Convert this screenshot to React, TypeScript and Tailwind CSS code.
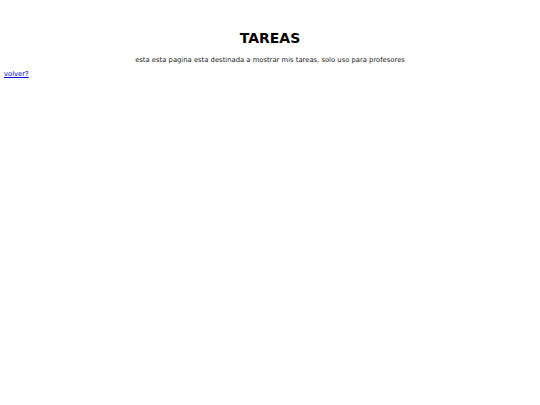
import React from 'react';

const App: React.FC = () => {
  return (
    <div className="min-h-[405px] bg-white text-black font-['DejaVu_Sans',sans-serif]">
      <div className="pt-[30px] text-center">
        <h1 className="text-[14px] font-bold leading-[16px]">TAREAS</h1>
        <p className="mt-[10px] text-[6.8px] leading-[9px] text-[#222]">
          esta esta pagina esta destinada a mostrar mis tareas, solo uso para profesores
        </p>
      </div>
      <div className="mt-[5px] px-[4px] text-[6.8px] leading-[9px]">
        <a href="#" className="text-[#0000ee] underline">volver?</a>
      </div>
    </div>
  );
};

export default App;
